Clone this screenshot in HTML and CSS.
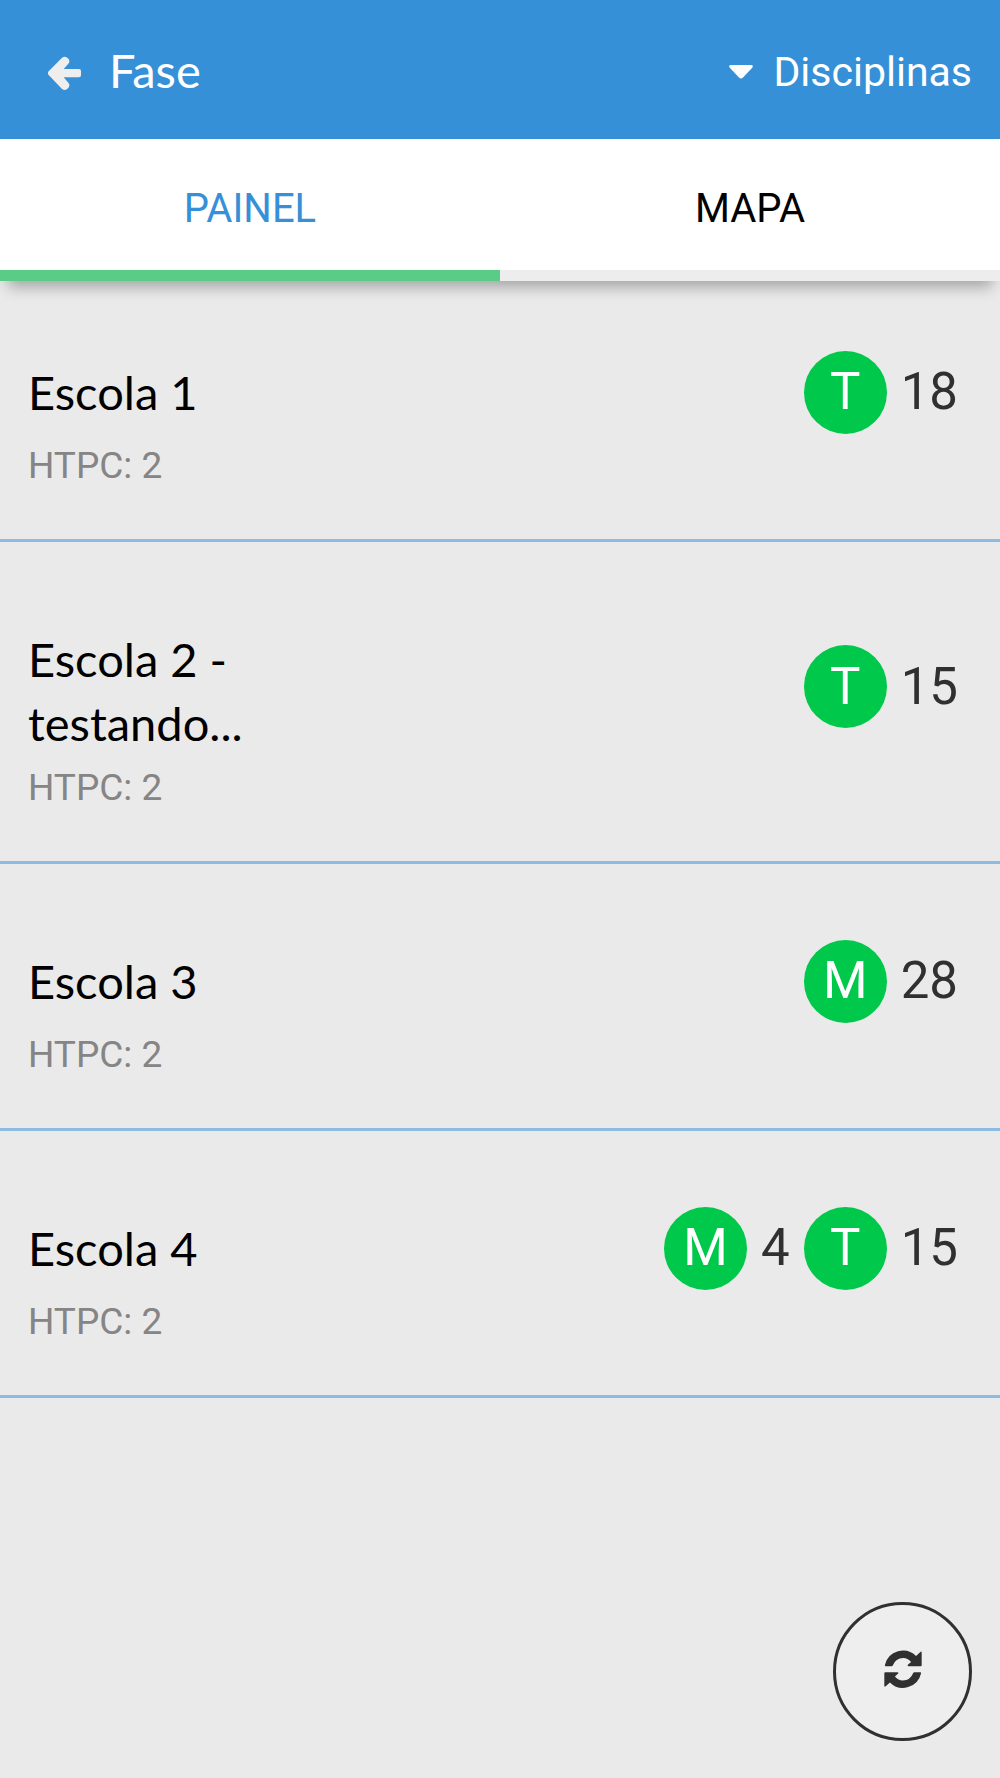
FILE: index.html
```html
<!DOCTYPE html>
<html lang="pt-BR">
<head>
  <meta charset="utf-8">
  <meta name="viewport" content="width=device-width, initial-scale=1">
  <title>Fase</title>
  <link rel="stylesheet" href="styles.css">
</head>
<body>
  <header class="topbar">
    <button class="back" type="button" aria-label="Voltar">
      <svg class="back-icon" viewBox="24 25 99 105" aria-hidden="true">
        <path fill="currentColor" d="M26 71 66 30Q76 24 84 32T85 48L71 64H117Q123 64 123 70V83Q123 89 117 89H71L85 105Q92 113 84 122T66 124L26 82Q21 77 26 71Z"/>
      </svg>
    </button>
    <h1 class="topbar-title">Fase</h1>
    <button class="subjects" type="button">
      <svg class="caret" viewBox="0 0 24 14" aria-hidden="true">
        <path d="M1.500 0H22.500Q25 .500 23 3L14 12.500Q12 14.500 10 12.500L1 3Q-1 .500 1.500 0Z" fill="currentColor"/>
      </svg>
      Disciplinas
    </button>
  </header>

  <nav class="tabs">
    <a class="tab tab-active" href="#painel" aria-current="page">PAINEL</a>
    <a class="tab" href="#mapa">MAPA</a>
  </nav>

  <main>
    <ul class="schools" id="painel">
      <li class="school">
        <div class="school-info">
          <h2 class="school-name">Escola 1</h2>
          <p class="school-meta">HTPC: 2</p>
        </div>
        <div class="shifts"><span class="badge">T</span><span>18</span></div>
      </li>
      <li class="school">
        <div class="school-info">
          <h2 class="school-name school-name-long">Escola 2 - testando...</h2>
          <p class="school-meta">HTPC: 2</p>
        </div>
        <div class="shifts"><span class="badge">T</span><span>15</span></div>
      </li>
      <li class="school">
        <div class="school-info">
          <h2 class="school-name">Escola 3</h2>
          <p class="school-meta">HTPC: 2</p>
        </div>
        <div class="shifts"><span class="badge">M</span><span>28</span></div>
      </li>
      <li class="school">
        <div class="school-info">
          <h2 class="school-name">Escola 4</h2>
          <p class="school-meta">HTPC: 2</p>
        </div>
        <div class="shifts"><span class="badge">M</span><span>4</span><span class="badge">T</span><span>15</span></div>
      </li>
    </ul>
  </main>

  <button class="refresh" type="button" aria-label="Atualizar">
    <svg class="refresh-icon" viewBox="25 29 115 115" aria-hidden="true">
      <path id="arc" fill="currentColor" d="M30 78Q27 78 28 74A56 56 0 0 1 122 47L135 35Q139 32 139 37V75Q139 78 136 78H100Q94 77 98 73L107 65Q97 53 83 53 60 54 52 75 51 78 48 78Z"/>
      <use href="#arc" transform="rotate(180 82.500 87)"/>
    </svg>
  </button>
</body>
</html>
```
FILE: styles.css
```css
* {
  box-sizing: border-box;
}

body {
  margin: 0;
  min-height: 100vh;
  background: #eaeaea;
  color: #303030;
  font-family: Roboto, "Liberation Sans", sans-serif;
}

h1,
h2,
p,
ul {
  margin: 0;
  padding: 0;
  font-weight: 400;
}

button {
  padding: 0;
  border: 0;
  background: none;
  color: inherit;
  font: inherit;
  cursor: pointer;
}

.topbar {
  display: flex;
  align-items: center;
  height: 139px;
  padding: 4px 28px 0 48px;
  background: #3590d8;
  color: #fff;
}

.back {
  display: flex;
  padding-top: 4px;
  color: #eee;
}

.back-icon {
  width: 33px;
  height: 35px;
}

.topbar-title {
  margin-left: 28px;
  padding-bottom: 4px;
  font-family: Lato, sans-serif;
  font-size: 47px;
  line-height: 64px;
}

.subjects {
  display: flex;
  align-items: center;
  gap: 20px;
  margin-left: auto;
  font-size: 41px;
  line-height: 48px;
}

.caret {
  width: 24px;
  height: 14px;
}

.tabs {
  position: relative;
  z-index: 1;
  display: flex;
  background: #fff;
  box-shadow: 0 14px 14px -8px rgba(0, 0, 0, 0.3);
}

.tab {
  flex: 1;
  padding: 46px 0 37px;
  border-bottom: 11px solid #ededed;
  color: #000;
  font-size: 40px;
  line-height: 48px;
  text-align: center;
  text-decoration: none;
}

.tab-active {
  border-color: #5bcc85;
  color: #3590d8;
}

.schools {
  margin-top: -6px;
  list-style: none;
}

.school {
  display: flex;
  align-items: center;
  justify-content: space-between;
  padding: 0 42px 30px 28px;
  border-bottom: 3px solid #8dbbe2;
}

.school-info {
  max-width: 300px;
  padding: 85px 0 21px;
}

.school-name {
  margin-bottom: 20px;
  color: #000;
  font-family: Lato, sans-serif;
  font-size: 47px;
  line-height: 64px;
}

.school-name-long {
  margin-bottom: 11px;
}

.school-meta {
  color: #858585;
  font-size: 37px;
  line-height: 44px;
}

.shifts {
  display: flex;
  align-items: center;
  gap: 14px;
  font-size: 51px;
  line-height: 60px;
}

.badge {
  display: flex;
  align-items: center;
  justify-content: center;
  width: 83px;
  height: 83px;
  border-radius: 50%;
  background: #00c84a;
  color: #fff;
}

.refresh {
  position: fixed;
  right: 28px;
  bottom: 37px;
  display: flex;
  align-items: center;
  justify-content: center;
  width: 139px;
  height: 139px;
  padding-bottom: 6px;
  border: 3px solid #303030;
  border-radius: 50%;
  background: #eee;
  color: #303030;
}

.refresh-icon {
  width: 38px;
  height: 38px;
}
```
